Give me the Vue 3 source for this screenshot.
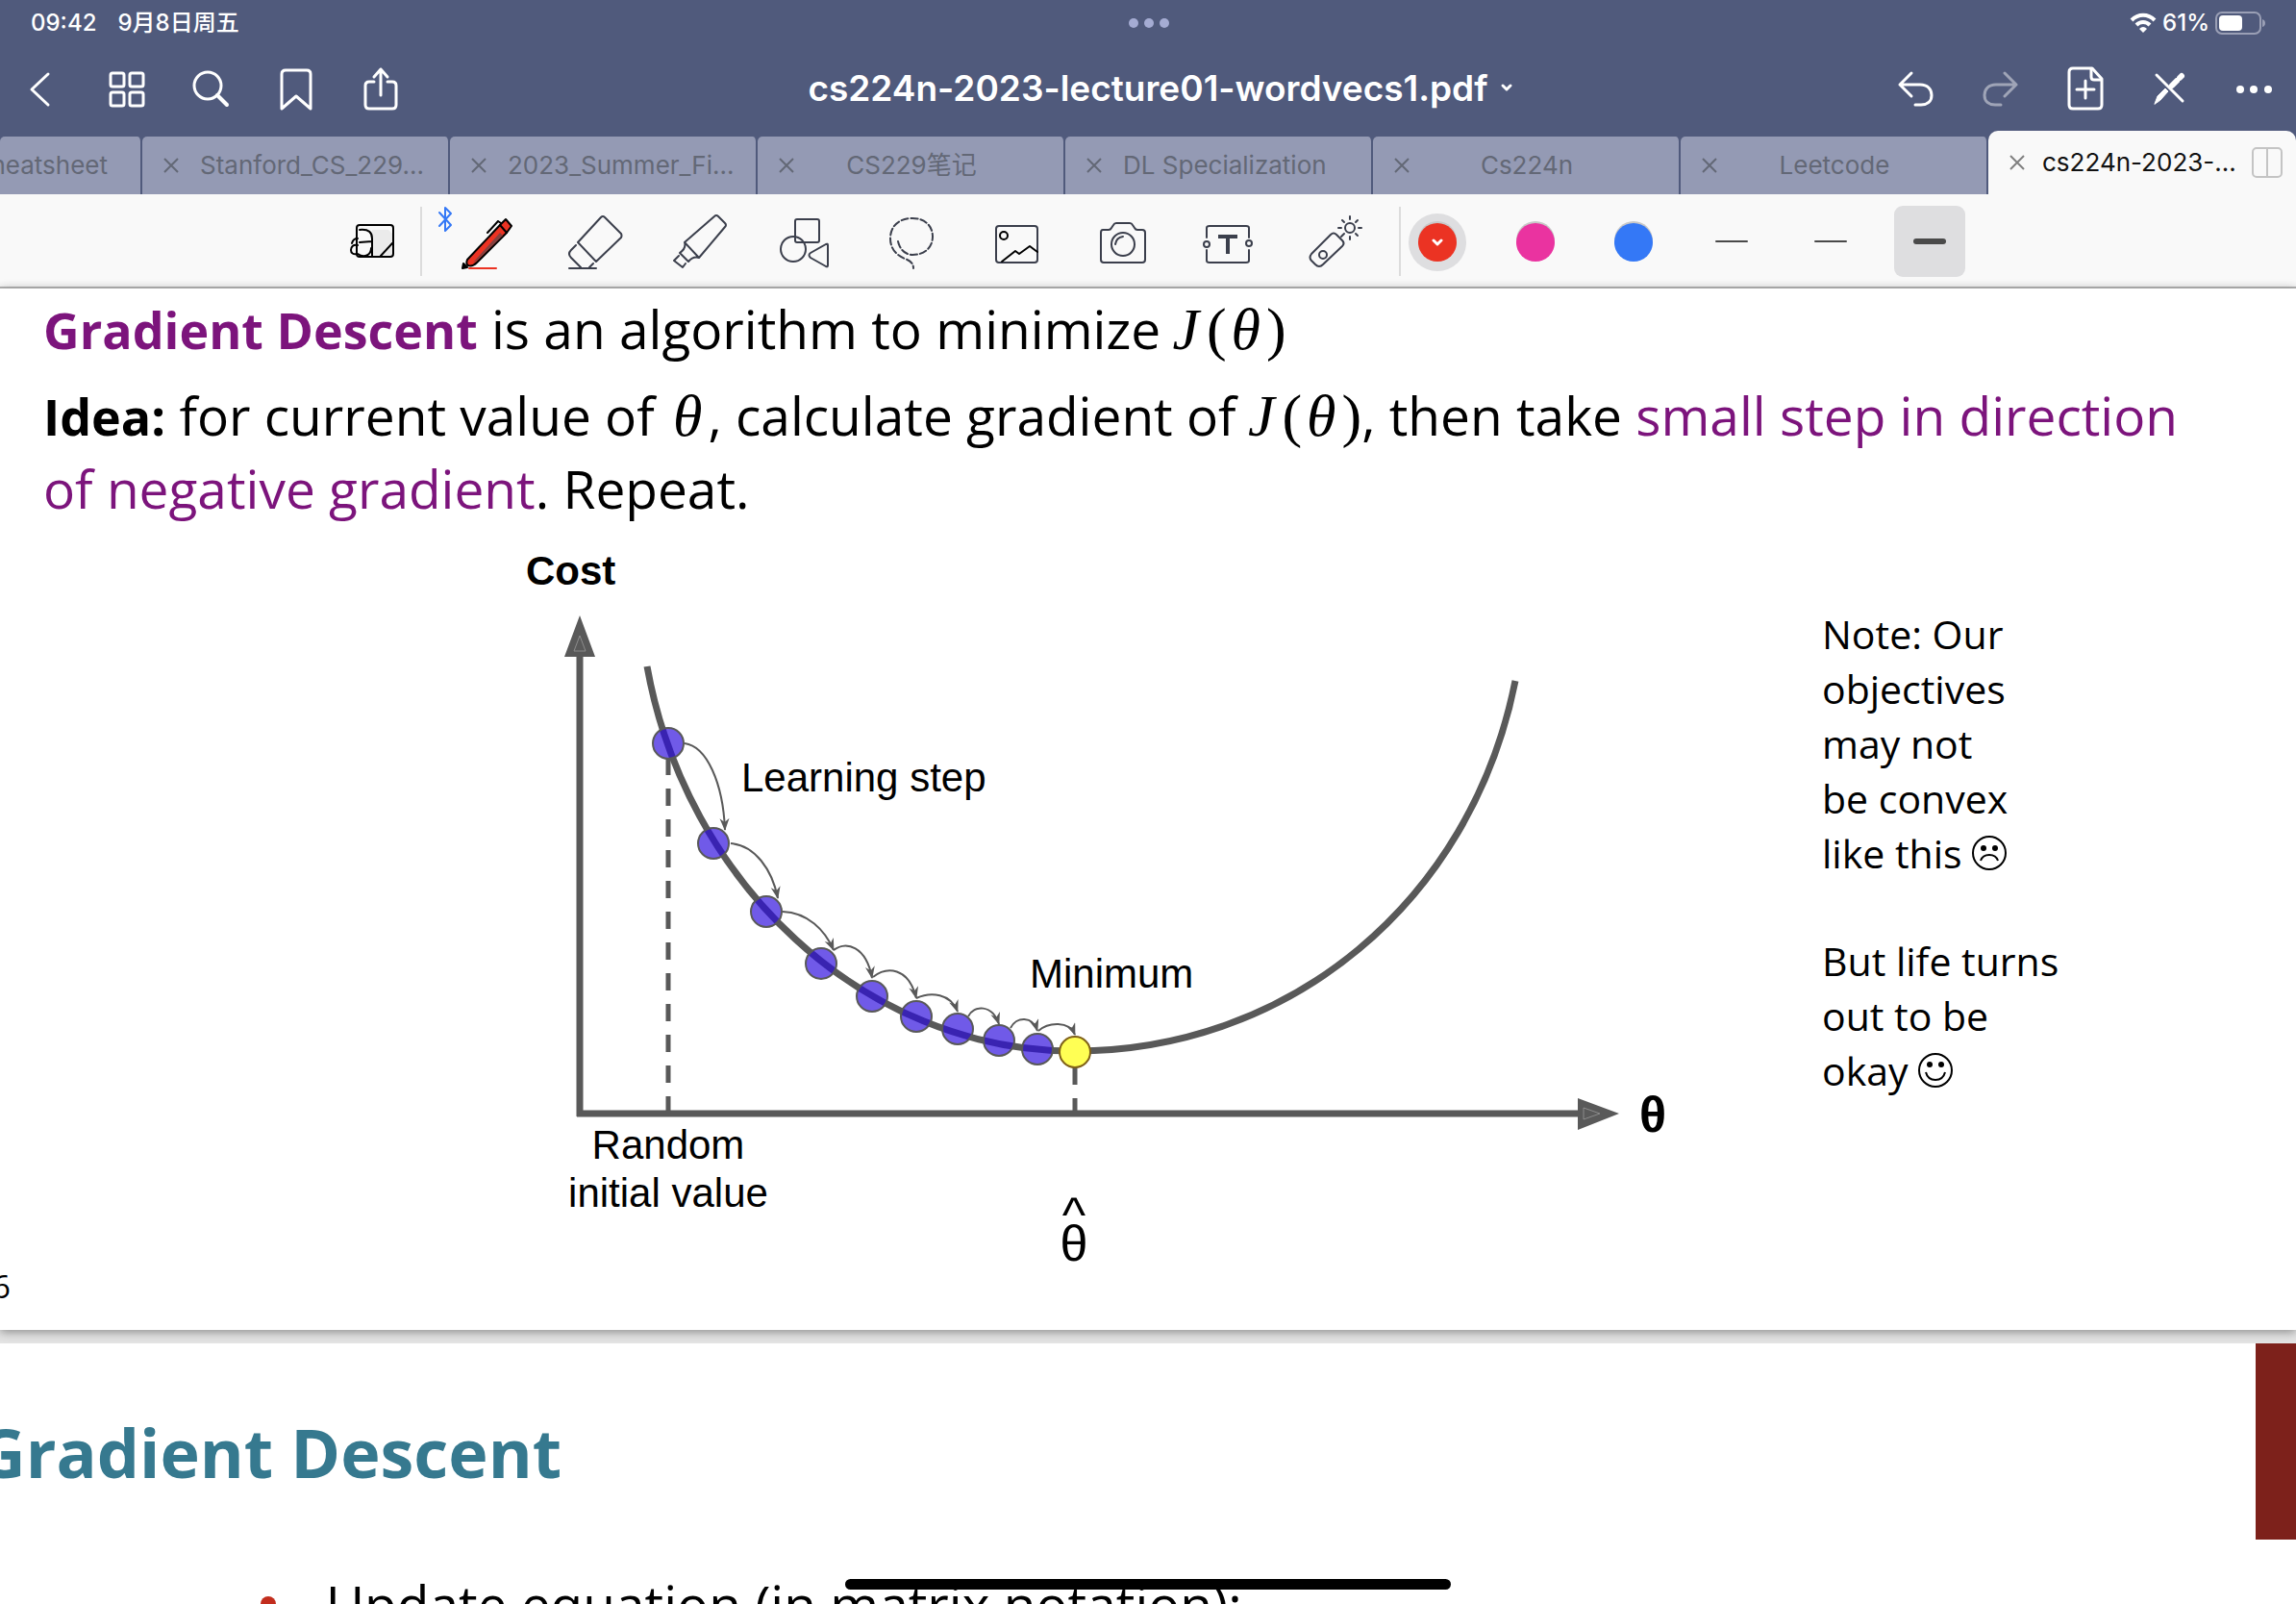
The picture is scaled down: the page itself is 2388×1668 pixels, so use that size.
<script setup>
import { ref } from 'vue'

const tabs = ['Stanford_CS_229...', '2023_Summer_Fi...', 'CS229笔记', 'DL Specialization', 'Cs224n', 'Leetcode']

const colors = [
  { name: 'Red', value: '#eb3323' },
  { name: 'Pink', value: '#ea33a0' },
  { name: 'Blue', value: '#3478f6' },
]
const activeColor = ref('Red')

const strokes = [
  { name: 'Thin', height: 2 },
  { name: 'Medium', height: 2 },
  { name: 'Thick', height: 6 },
]
const activeStroke = ref('Thick')

const steps = [
  [695, 774], [742, 878], [797, 949], [854, 1003], [907, 1037],
  [953, 1058], [996, 1071], [1039, 1083], [1079, 1092],
]

const hops = [
  'M712 774C735 777 752 815 754 864',
  'M760 878C785 880 803 905 809 935',
  'M814 949C840 950 858 968 867 989',
  'M867 989C880 979 901 985 907 1018',
  'M908 1017C922 1006 945 1006 953 1039',
  'M953 1039C968 1032 989 1034 996 1053',
  'M1007 1058C1013 1046 1032 1045 1039 1066',
  'M1051 1070C1057 1058 1074 1057 1079 1073',
  'M1080 1073C1090 1064 1112 1062 1118 1077',
]
</script>

<template>
  <div class="app">
    <header class="top">
      <div class="status">
        <div class="clock"><span>09:42</span><span>9月8日周五</span></div>
        <div class="handle"><i></i><i></i><i></i></div>
        <div class="power">
          <svg width="28" height="22" viewBox="0 0 28 22" fill="none" stroke="#fff" stroke-width="4">
            <path d="M2 8C9 1 19 1 26 8" />
            <path d="M7 13C11 9 17 9 21 13" />
            <path d="M10 17Q14 13 18 17L14 21Z" fill="#fff" stroke="none" />
          </svg>
          <span>61%</span>
          <svg width="53" height="24" viewBox="0 0 53 24">
            <rect x="1" y="1" width="46" height="22" rx="6" fill="none" stroke="#9a9fb5" stroke-width="2" />
            <rect x="4" y="4" width="24" height="16" rx="4" fill="#fff" />
            <path d="M49 8Q52 9 52 12Q52 15 49 16Z" fill="#9a9fb5" />
          </svg>
        </div>
      </div>

      <nav class="bar">
        <div class="group">
          <button aria-label="Back">
            <svg viewBox="0 0 48 48"><path d="M30 9L13 25L30 41" /></svg>
          </button>
          <button aria-label="Thumbnails">
            <svg viewBox="0 0 48 48">
              <rect x="7" y="8" width="14" height="14" rx="2" /><rect x="27" y="8" width="14" height="14" rx="2" />
              <rect x="7" y="28" width="14" height="14" rx="2" /><rect x="27" y="28" width="14" height="14" rx="2" />
            </svg>
          </button>
          <button aria-label="Search">
            <svg viewBox="0 0 48 48"><circle cx="20" cy="21" r="14" /><path d="M30 31L40 41" stroke-width="4" /></svg>
          </button>
          <button aria-label="Bookmark">
            <svg viewBox="0 0 48 48"><path d="M9 45V9Q9 5 13 5H35Q39 5 39 9V45L24 32Z" /></svg>
          </button>
          <button aria-label="Share">
            <svg viewBox="0 0 48 48">
              <path d="M17 17H12Q8 17 8 21V41Q8 45 12 45H36Q40 45 40 41V21Q40 17 36 17H31" />
              <path d="M24 31V4M17 12L24 4L31 12" />
            </svg>
          </button>
        </div>

        <button class="title">
          <span>cs224n-2023-lecture01-wordvecs1.pdf</span>
          <svg class="caret" viewBox="0 0 14 10"><path d="M3 3L7 7L11 3" /></svg>
        </button>

        <div class="group">
          <button aria-label="Undo">
            <svg viewBox="0 0 48 48"><path d="M20 8L8 20L20 32M8 20H29C37 20 41 25 41 31C41 38 36 41 30 41H24" /></svg>
          </button>
          <button aria-label="Redo" class="faded">
            <svg viewBox="0 0 48 48"><path d="M29 8L41 20L29 32M41 20H20C12 20 8 25 8 31C8 38 13 41 19 41H25" /></svg>
          </button>
          <button aria-label="Add page">
            <svg viewBox="0 0 48 48">
              <path d="M12 3H32L42 14V41Q42 45 38 45H12Q8 45 8 41V7Q8 3 12 3Z" />
              <path d="M31 4V12Q31 15 34 15H41M25 16V34M16 25H34" />
            </svg>
          </button>
          <button aria-label="Read-only mode">
            <svg viewBox="0 0 48 48">
              <path d="M11 10L38 37" />
              <path d="M9 40L12 32L20 24L23 27L15 36Z" fill="#fff" stroke-width="1" />
              <path d="M27 21L32 16M35 13L37 11" stroke-width="6" />
            </svg>
          </button>
          <button aria-label="More">
            <svg viewBox="0 0 48 48"><g fill="#fff" stroke="none"><circle cx="10" cy="25" r="4" /><circle cx="24" cy="25" r="4" /><circle cx="39" cy="25" r="4" /></g></svg>
          </button>
        </div>
      </nav>

      <div class="tabs">
        <div class="tab first"><a href="#">heatsheet</a></div>
        <div v-for="t in tabs" :key="t" class="tab">
          <button class="close" :aria-label="'Close ' + t">
            <svg viewBox="0 0 16 16"><path d="M1 1L15 15M15 1L1 15" /></svg>
          </button>
          <a href="#">{{ t }}</a>
        </div>
        <div class="tab current">
          <button class="close" aria-label="Close cs224n-2023">
            <svg viewBox="0 0 16 16"><path d="M1 1L15 15M15 1L1 15" /></svg>
          </button>
          <a href="#">cs224n-2023-...</a>
          <button class="split" aria-label="Split view">
            <svg viewBox="0 0 32 32"><rect x="1" y="1" width="30" height="30" rx="4" /><path d="M16 1V31" /></svg>
          </button>
        </div>
      </div>
    </header>

    <div class="tools">
      <button class="tool lead" aria-label="Zoom window">
        <svg viewBox="0 0 64 64">
          <path d="M29 19H46L50 23V46H29Z" fill="#ebebeb" stroke="none" />
          <rect x="13" y="14" width="38" height="33" rx="3" />
          <path d="M16 19C26 18 29 22 29 28V46M16 32L29 31M8 33C9 29 11 28 14 28M14 35C9 34 7 37 7 40C7 43 9 45 14 44C21 49 28 45 28 38M38 46L50 33" />
        </svg>
      </button>
      <span class="rule"></span>
      <div class="toolset">
        <button class="tool" aria-label="Pen">
          <svg viewBox="0 0 64 64">
            <path d="M10 50L44 14L50 8L56 15L51 22L20 53C15 58 7 58 10 50Z" fill="#eb3323" stroke="#000" />
            <path d="M47 25L20 51L16 53L44 22Z" fill="#84413f" stroke="none" />
            <path d="M44 14L51 22M42 10L31 22M42 10L45 12" stroke="#000" />
            <path d="M5 59L6 54L10 58Z" fill="#000" stroke="#000" />
            <path d="M12 59H40" stroke="#eb3323" />
          </svg>
          <svg class="bt" viewBox="0 0 16 28"><path d="M2 7L14 20L8 26V2L14 8L2 21" /></svg>
        </button>
        <button class="tool" aria-label="Eraser">
          <svg viewBox="0 0 64 64">
            <path d="M39 6Q41 4 43 6L60 23Q61 25 60 27L34 52L15 32ZM13 35L8 40Q4 44 8 48L18 58M31 54L27 58M6 59H34" />
          </svg>
        </button>
        <button class="tool" aria-label="Highlighter">
          <svg viewBox="0 0 64 64">
            <path d="M47 5Q49 3 51 5L58 12Q60 14 58 16L31 48L16 32ZM16 32Q18 38 11 43L20 52Q25 46 31 48M10 46L5 51L14 58L17 54" />
          </svg>
        </button>
        <button class="tool" aria-label="Shapes">
          <svg viewBox="0 0 64 64">
            <rect x="21" y="8" width="25" height="24" rx="2" /><circle cx="19" cy="39" r="13" />
            <path d="M37 43L53 34Q55 33 55 35V56Q55 58 53 57L37 48Q34 45 37 43Z" />
          </svg>
        </button>
        <button class="tool" aria-label="Lasso">
          <svg viewBox="0 0 64 64">
            <path stroke-dasharray="7 3" d="M18 31C20 40 26 45 33 45C46 45 54 37 54 26C54 14 45 7 33 7C19 7 10 15 10 28C10 40 18 46 25 49C31 51 34 54 34 59" />
          </svg>
        </button>
        <button class="tool" aria-label="Image">
          <svg viewBox="0 0 64 64">
            <rect x="10" y="15" width="43" height="38" rx="3" />
            <path d="M16 52L30 41L34 44L45 36L53 42" stroke="#000" /><circle cx="18" cy="25" r="4" stroke="#000" />
          </svg>
        </button>
        <button class="tool" aria-label="Camera">
          <svg viewBox="0 0 64 64">
            <path d="M11 19H17Q19 19 20 17L22 14Q23 12 25 12H39Q41 12 42 14L44 17Q45 19 47 19H52Q55 19 55 22V50Q55 53 52 53H12Q9 53 9 50V22Q9 19 11 19Z" />
            <circle cx="32" cy="34" r="12" /><path d="M24 34Q25 27 32 26" />
          </svg>
        </button>
        <button class="tool" aria-label="Text">
          <svg viewBox="0 0 64 64">
            <path d="M9 27V17Q9 15 12 15H50Q53 15 53 17V27M53 40V51Q53 53 50 53H12Q9 53 9 51V40" />
            <circle cx="9" cy="34" r="3" /><circle cx="53" cy="33" r="3" />
            <path d="M21 26H41M31 26V44" stroke-width="4" stroke-linecap="butt" />
          </svg>
        </button>
        <button class="tool" aria-label="Laser pointer">
          <svg viewBox="0 0 64 64">
            <path d="M28 24Q31 21 34 24L40 30Q43 33 40 36L20 55Q16 59 12 55L8 51Q5 48 8 44Z" />
            <circle cx="20" cy="45" r="4" /><circle cx="48" cy="17" r="5" />
            <path d="M48 8V5M48 26V29M39 17H36M57 17H60M42 11L40 9M54 11L56 9M54 23L56 25M42 23L39 26" />
          </svg>
        </button>
      </div>
      <span class="rule"></span>
      <div class="swatches">
        <button
          v-for="c in colors" :key="c.name" class="swatch" :class="{ on: c.name === activeColor }"
          :aria-label="c.name" @click="activeColor = c.name"
        >
          <span :style="{ background: c.value }">
            <svg v-if="c.name === activeColor" class="caret" viewBox="0 0 14 10"><path d="M3 3L7 7L11 3" /></svg>
          </span>
        </button>
      </div>
      <div class="strokes">
        <button
          v-for="s in strokes" :key="s.name" class="stroke" :class="{ on: s.name === activeStroke }"
          :aria-label="s.name" @click="activeStroke = s.name"
        >
          <span :style="{ height: s.height + 'px' }"></span>
        </button>
      </div>
    </div>

    <main>
      <section class="slide">
        <div class="copy">
          <p><b class="accent">Gradient Descent</b> is an algorithm to minimize <span class="math"><i class="fn">J</i>(<i>θ</i>)</span></p>
          <p>
            <b>Idea:</b> for current value of <span class="math"><i>θ</i></span>, calculate gradient of
            <span class="math"><i class="fn">J</i>(<i>θ</i>)</span>, then take <span class="accent">small step in direction<br />of negative gradient</span>. Repeat.
          </p>
        </div>

        <div class="figure">
          <svg class="plot" viewBox="530 560 1230 760">
            <defs>
              <marker id="tip" markerUnits="userSpaceOnUse" markerWidth="14" markerHeight="12" refX="12" refY="5" orient="auto">
                <path d="M0 0L13 5L0 10L4 5Z" fill="#595959" />
              </marker>
            </defs>
            <g fill="none" stroke="#595959">
              <path d="M603 1162V680M600 1159H1645" stroke-width="7" />
              <path d="M695 789V1157" stroke-width="5" stroke-dasharray="18 14" />
              <path d="M1118 1111V1157" stroke-width="5" stroke-dasharray="18 14" />
              <path d="M673 694C713 917 896 1094 1118 1094C1340 1094 1530 940 1576 709" stroke-width="7" />
              <path v-for="h in hops" :key="h" :d="h" stroke-width="2" marker-end="url(#tip)" />
            </g>
            <path d="M603 641L619 684H587ZM1684 1159L1641 1143V1176Z" fill="#595959" />
            <path d="M603 662L609 678H597ZM1664 1159L1647 1153V1165Z" fill="none" stroke="#8c8c8c" />
            <circle
              v-for="p in steps" :key="p[0]" :cx="p[0]" :cy="p[1]" r="16"
              fill="#2a09dd" fill-opacity="0.67" stroke="#595959" stroke-width="2"
            />
            <circle cx="1118" cy="1095" r="16" fill="#ffff54" stroke="#7f6018" stroke-width="2" />
            <g class="labels">
              <text x="547" y="609" font-weight="700">Cost</text>
              <text x="771" y="824">Learning step</text>
              <text x="1071" y="1028">Minimum</text>
              <text x="695" y="1206" text-anchor="middle">Random</text>
              <text x="695" y="1256" text-anchor="middle">initial value</text>
              <text class="big" x="1719" y="1178" text-anchor="middle" font-weight="700">θ</text>
              <text class="big" x="1117" y="1282" text-anchor="middle">^</text>
              <text class="big" x="1117" y="1312" text-anchor="middle">θ</text>
            </g>
          </svg>

          <aside class="notes">
            <p>Note: Our<br />objectives<br />may not<br />be convex<br />like this
              <svg class="face" viewBox="0 0 36 36" role="img" aria-label="sad face">
                <circle cx="18" cy="18" r="17" /><path d="M9 26Q11 20 18 20Q25 20 27 26" />
                <circle cx="12" cy="13" r="3" class="eye" /><circle cx="24" cy="13" r="3" class="eye" />
              </svg>
            </p>
            <p>But life turns<br />out to be<br />okay
              <svg class="face" viewBox="0 0 36 36" role="img" aria-label="smiling face">
                <circle cx="18" cy="18" r="17" /><path d="M8 20Q10 28 18 28Q26 28 28 20" />
                <circle cx="12" cy="12" r="3" class="eye" /><circle cx="24" cy="12" r="3" class="eye" />
              </svg>
            </p>
          </aside>
        </div>
        <footer class="number">6</footer>
      </section>

      <section class="slide next">
        <h1>Gradient Descent</h1>
        <ul><li>Update equation (in matrix notation):</li></ul>
        <span class="ribbon"></span>
      </section>
    </main>
    <div class="home"></div>
  </div>
</template>

<style>
body { margin: 0; }
</style>

<style scoped>
.app {
  height: 100vh;
  overflow: hidden;
  background: #e4e4e4;
  color: #000;
  font-family: Inter, "Noto Sans CJK SC", sans-serif;
}
button { padding: 0; border: 0; background: none; font: inherit; color: inherit; }
a { color: inherit; text-decoration: none; }
p { margin: 0; }
svg { display: block; fill: none; flex: none; }

.top { background: #505a7c; color: #fff; }
.status {
  display: grid;
  grid-template-columns: 1fr auto 1fr;
  align-items: center;
  height: 48px;
  padding: 0 31px 0 32px;
  font-size: 24px;
  font-weight: 500;
  line-height: 48px;
}
.clock { display: flex; align-items: baseline; gap: 22px; }
.handle { display: flex; gap: 6px; }
.handle i { width: 10px; height: 10px; border-radius: 50%; background: #a5acd3; }
.power { display: flex; justify-content: flex-end; align-items: center; gap: 6px; }

.bar { display: flex; align-items: center; height: 88px; }
.group { display: flex; }
.group button { display: grid; place-items: center; width: 88px; height: 88px; }
.group svg { width: 48px; height: 48px; }
.group svg, .caret { stroke: #fff; stroke-width: 3; stroke-linecap: round; stroke-linejoin: round; }
.group .faded { opacity: 0.45; }
.title {
  flex: 1;
  display: flex;
  justify-content: center;
  align-items: center;
  gap: 12px;
  padding: 0 0 2px 26px;
  font-size: 37px;
  font-weight: 600;
}
.caret { width: 14px; height: 10px; }

.tabs {
  display: grid;
  grid-template-columns: 148px repeat(7, minmax(0, 1fr));
  align-items: end;
  height: 66px;
}
.tab {
  box-sizing: border-box;
  display: flex;
  align-items: center;
  height: 60px;
  padding: 0 58px 0 22px;
  border-right: 2px solid #505a7c;
  border-radius: 5px 5px 0 0;
  background: #949ab4;
  color: #636876;
  font-size: 26px;
  line-height: 32px;
}
.tab a { flex: 1; min-width: 0; height: 32px; white-space: nowrap; text-align: center; }
.tab.first { justify-content: flex-end; padding: 0 34px 0 0; overflow: hidden; }
.tab.first a { flex: none; }
.close { flex: none; width: 38px; }
.close svg { width: 16px; height: 16px; stroke: currentColor; stroke-width: 2; }
.tab.current {
  height: 66px;
  padding: 0 14px 0 22px;
  border: 0;
  border-radius: 10px 10px 0 0;
  background: #f9f9f9;
  color: #111;
}
.tab.current a { text-align: left; }
.current .close { width: 34px; color: #808080; }
.split svg { width: 32px; height: 32px; stroke: #c4c4c4; stroke-width: 2; }

.tools {
  box-sizing: border-box;
  display: flex;
  align-items: center;
  height: 98px;
  padding: 4px 0 0 335px;
  border-bottom: 2px solid #b0b0b0;
  background: #f9f9f9;
}
.tool { position: relative; display: grid; place-items: center; width: 110px; height: 92px; }
.tool svg {
  width: 64px;
  height: 64px;
  stroke: #3b3f4c;
  stroke-width: 2;
  stroke-linecap: round;
  stroke-linejoin: round;
}
.tool .bt { position: absolute; left: 2px; top: 8px; width: 16px; height: 28px; stroke: #3478f6; }
.tool.lead svg { stroke: #000; }
.lead { margin-right: -8px; }
.rule { width: 2px; height: 72px; margin-bottom: 3px; background: #dcdcdc; }
.toolset { display: flex; margin: 0 12px 0 14px; }
.swatches { display: flex; align-items: center; gap: 42px; margin-left: 8px; }
.swatch { display: grid; place-items: center; width: 60px; height: 60px; border-radius: 50%; }
.swatch.on { background: #dedee0; }
.swatch span {
  display: grid;
  place-items: center;
  width: 40px;
  height: 40px;
  border-radius: 50%;
  box-shadow: 0 -2px 0 #c8c8c8;
}
.strokes { display: flex; gap: 29px; margin: 0 0 3px 35px; }
.stroke { display: grid; place-items: center; width: 74px; height: 74px; border-radius: 9px; }
.stroke.on { background: #dedee0; }
.stroke span { width: 34px; border-radius: 3px; background: #4a4a4a; }

.slide { position: relative; overflow: hidden; background: #fff; font-family: "Open Sans", sans-serif; }
.slide:first-child { box-shadow: 0 2px 10px #888; }
.copy {
  display: flex;
  flex-direction: column;
  gap: 14px;
  padding: 4px 45px 13px;
  font-size: 55px;
  line-height: 76px;
  white-space: nowrap;
}
.copy b { font-size: 52px; line-height: 0; }
.accent { color: #7c147c; }
.math { font-family: "Liberation Serif", serif; font-size: 62px; line-height: 0; }
.math i { margin: 0 6px 0 5px; }
.math .fn { margin: 0 8px 0 -2px; }
.figure { display: flex; padding-left: 530px; }
.plot { flex: 0 1 1230px; min-width: 0; }
.labels { fill: #000; font-family: "Liberation Sans", sans-serif; font-size: 42px; }
.big { font-size: 52px; }
.notes {
  flex: none;
  display: flex;
  flex-direction: column;
  gap: 55px;
  margin: 72px 0 0 135px;
  font-size: 41px;
  line-height: 57px;
}
.face { display: inline-block; width: 36px; height: 36px; vertical-align: -2px; stroke: #000; stroke-width: 2; }
.eye { fill: #000; stroke: none; }
.number { height: 64px; margin-left: -8px; font-size: 33px; line-height: 38px; }
.next { margin-top: 14px; padding-top: 69px; }
h1 { margin: 0 0 76px -24px; color: #36798f; font-size: 70px; line-height: 88px; font-weight: 700; }
ul { margin: 0; padding: 0 0 0 271px; list-style: none; font-size: 55px; line-height: 76px; }
li { display: flex; align-items: center; gap: 52px; white-space: nowrap; }
li::before { content: ""; width: 16px; height: 16px; border-radius: 50%; background: #c22d1d; }
.ribbon { position: absolute; top: 0; right: 0; width: 42px; height: 204px; background: #7d211b; }
.home {
  position: fixed;
  left: 50%;
  bottom: 15px;
  width: 630px;
  height: 11px;
  margin-left: -315px;
  border-radius: 6px;
  background: #000;
}
</style>
